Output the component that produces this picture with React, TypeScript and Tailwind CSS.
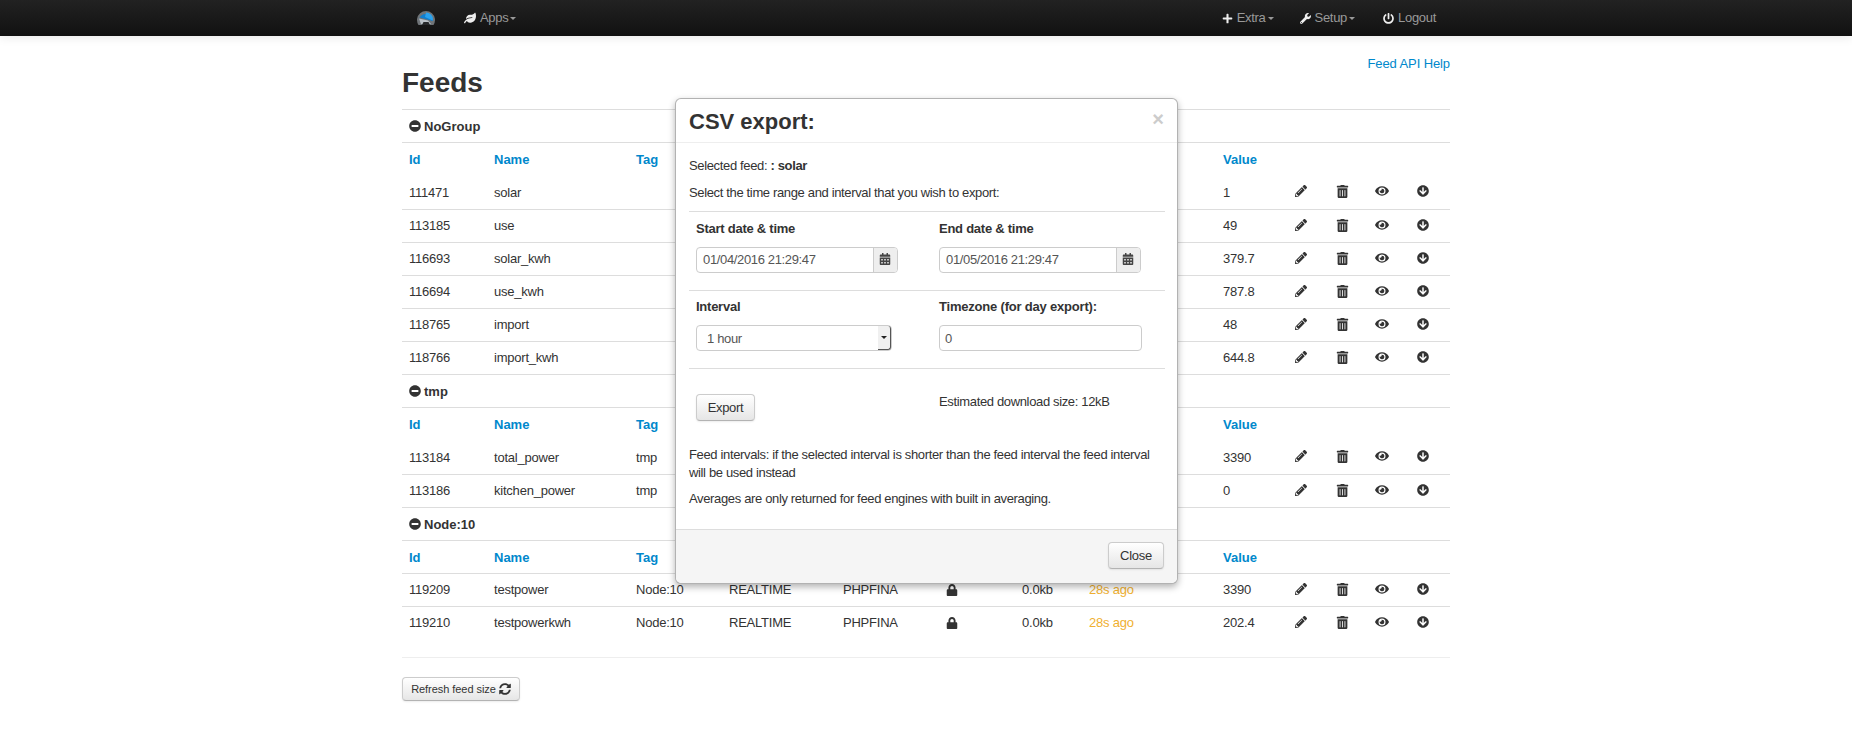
import React from "react";
import { FaArrowCircleDown, FaCalendarAlt, FaEye, FaLeaf, FaLock, FaMinusCircle, FaPencilAlt, FaPlus, FaPowerOff, FaSyncAlt, FaTrashAlt, FaWrench } from "react-icons/fa";

type Row = { id: string; name: string; tag?: string; dt?: string; eng?: string; size?: string; upd?: string; value: string };
type Group = { title: string; headLine?: boolean; rows: Row[] };

const groups: Group[] = [
  { title: "NoGroup", rows: [
    { id: "111471", name: "solar", value: "1" },
    { id: "113185", name: "use", value: "49" },
    { id: "116693", name: "solar_kwh", value: "379.7" },
    { id: "116694", name: "use_kwh", value: "787.8" },
    { id: "118765", name: "import", value: "48" },
    { id: "118766", name: "import_kwh", value: "644.8" },
  ]},
  { title: "tmp", rows: [
    { id: "113184", name: "total_power", tag: "tmp", value: "3390" },
    { id: "113186", name: "kitchen_power", tag: "tmp", value: "0" },
  ]},
  { title: "Node:10", headLine: true, rows: [
    { id: "119209", name: "testpower", tag: "Node:10", dt: "REALTIME", eng: "PHPFINA", size: "0.0kb", upd: "28s ago", value: "3390" },
    { id: "119210", name: "testpowerkwh", tag: "Node:10", dt: "REALTIME", eng: "PHPFINA", size: "0.0kb", upd: "28s ago", value: "202.4" },
  ]},
];

function Caret() {
  return <span className="ml-[2px] inline-block h-0 w-0 border-x-[3.5px] border-t-[3.5px] border-x-transparent border-t-[#999]" />;
}

function Logo() {
  return (
    <svg width="20" height="16" viewBox="0 0 20 16">
      <path d="M2.5 15 A9 9 0 1 1 17.5 15 L14 15 L6 15 Z" fill="#6f7478" />
      <path d="M3 9.5 A7.2 7.2 0 0 1 17 9.5 L16.5 11 L4 7.5 Z" fill="#0f7fd0" />
      <path d="M10 2.5 A7 7 0 0 1 17 9.5 L16.5 10.5 L9 7 Z" fill="#2aa2ee" />
      <path d="M3 8.5 L12 10.5 L15 14 L5 14 Z" fill="#b9c0c6" />
      <path d="M7.5 12 L12.5 12 L14 15 L6 15 Z" fill="#26282a" />
    </svg>
  );
}

function NavItem({ icon, label, caret, className = "" }: { icon: React.ReactNode; label: string; caret?: boolean; className?: string }) {
  return (
    <a className={`flex items-center text-[13px] tracking-[-0.3px] text-[#999] ${className}`}>
      <span className="mr-[4px] flex text-[#eee]">{icon}</span>
      {label}
      {caret && <Caret />}
    </a>
  );
}

function Btn({ children, className = "" }: { children: React.ReactNode; className?: string }) {
  return (
    <button className={`flex items-center justify-center rounded-[4px] border border-[#ccc] border-b-[#b3b3b3] bg-gradient-to-b from-white to-[#e6e6e6] text-[#333] shadow-[0_1px_2px_rgba(0,0,0,0.08)] ${className}`}>
      {children}
    </button>
  );
}

function DateField({ value }: { value: string }) {
  return (
    <div className="flex h-[26px] w-[202px] rounded-[4px] border border-[#ccc]">
      <div className="flex flex-1 items-center pl-[6px] text-[#555]">{value}</div>
      <div className="flex w-[24px] items-start justify-center rounded-r-[3px] border-l border-[#ccc] bg-[#eee] pr-[2px] pt-[5px] text-[#444]">
        <FaCalendarAlt size={12} />
      </div>
    </div>
  );
}

function FeedRow({ r, first, line }: { r: Row; first: boolean; line: boolean }) {
  const base = `p-0 pl-[7px] align-middle ${first && !line ? "h-[34px]" : "h-[33px]"} ${line ? "border-t border-[#ddd]" : ""}`;
  const td = line ? base : `${base} pt-px`;
  const ic = `${base} pb-[2px]`;
  return (
    <tr>
      <td className={td}>{r.id}</td>
      <td className={td}>{r.name}</td>
      <td className={td}>{r.tag}</td>
      <td className={td}>{r.dt}</td>
      <td className={td}>{r.eng}</td>
      <td className={base}>{r.dt && <FaLock size={12} className="text-[#333]" />}</td>
      <td className={td}>{r.size}</td>
      <td className={`${td} text-[#f0b030]`}>{r.upd}</td>
      <td className={td}>{r.value}</td>
      <td className={ic}><FaPencilAlt size={12} className="text-[#333]" /></td>
      <td className={ic}><FaTrashAlt size={13} className="text-[#333]" /></td>
      <td className={ic}><FaEye size={14} className="text-[#333]" /></td>
      <td className={ic}><FaArrowCircleDown size={12} className="text-[#333]" /></td>
    </tr>
  );
}

const widths = [85, 142, 93, 114, 103, 76, 67, 134, 72, 41, 39, 42, 40];

function FeedTable() {
  return (
    <table className="w-full table-fixed tracking-[-0.22px]">
      <colgroup>
        {widths.map((w, i) => <col key={i} style={{ width: w }} />)}
      </colgroup>
      <tbody>
        {groups.map((g) => (
          <React.Fragment key={g.title}>
            <tr>
              <td colSpan={13} className="h-[33px] border-t border-[#ddd] p-0 pl-[7px] align-middle font-bold tracking-normal">
                <span className="flex items-center gap-[3px]"><FaMinusCircle size={12} className="text-[#333]" /><span className="pt-[1px]">{g.title}</span></span>
              </td>
            </tr>
            <tr className="font-bold tracking-normal text-[#0088cc]">
              {["Id", "Name", "Tag", "", "", "", "", "", "Value", "", "", "", ""].map((h, i) => (
                <td key={i} className="h-[33px] border-t border-[#ddd] p-0 pl-[7px] pt-px align-middle">{h}</td>
              ))}
            </tr>
            {g.rows.map((r, i) => <FeedRow key={r.id} r={r} first={i === 0} line={i > 0 || !!g.headLine} />)}
          </React.Fragment>
        ))}
      </tbody>
    </table>
  );
}

function Modal() {
  return (
    <div className="absolute left-[675px] top-[98px] w-[503px] rounded-[6px] border border-[rgba(0,0,0,0.3)] bg-white shadow-[0_3px_7px_rgba(0,0,0,0.3)]">
      <div className="relative flex h-[44px] items-center border-b border-[#eee] pl-[13px]">
        <h3 className="pt-[2px] text-[22px] font-bold leading-[30px]">CSV export:</h3>
        <span className="absolute right-[13px] top-[10px] text-[20px] font-bold leading-[20px] text-[#ccc]">×</span>
      </div>
      <div className="h-[386px] pl-[13px] pr-[12px] pt-[13px] tracking-[-0.35px]">
        <p>Selected feed: <b>: solar</b></p>
        <p className="mt-[7px]">Select the time range and interval that you wish to export:</p>
        <div className="mt-[8px] flex h-[79px] border-t border-[#ddd] pl-[7px] pt-[7px]">
          <div className="w-[243px]"><div className="font-bold tracking-[-0.25px]">Start date &amp; time</div><div className="mt-[8px]"><DateField value="01/04/2016 21:29:47" /></div></div>
          <div><div className="font-bold tracking-[-0.25px]">End date &amp; time</div><div className="mt-[8px]"><DateField value="01/05/2016 21:29:47" /></div></div>
        </div>
        <div className="flex h-[78px] border-t border-[#ddd] pl-[7px] pt-[6px]">
          <div className="w-[243px]">
            <div className="font-bold tracking-[-0.25px]">Interval</div>
            <div className="mt-[8px] flex h-[26px] w-[196px] rounded-[4px] border border-[#ccc]">
              <div className="flex flex-1 items-center pl-[10px] pt-px text-[#555]">1 hour</div>
              <div className="flex w-[13px] items-center justify-center rounded-r-[3px] border-b border-r border-[#555] bg-[#f0f0f0]">
                <span className="h-0 w-0 border-x-[3px] border-t-[3px] border-x-transparent border-t-[#222]" />
              </div>
            </div>
          </div>
          <div>
            <div className="font-bold tracking-[-0.2px]">Timezone (for day export):</div>
            <div className="mt-[8px] flex h-[26px] w-[203px] items-center rounded-[4px] border border-[#ccc] pl-[5px] pt-px text-[#555]">0</div>
          </div>
        </div>
        <div className="flex h-[78px] border-t border-[#ddd] pl-[7px] pt-[23px]">
          <div className="w-[243px]"><Btn className="mt-[2px] h-[27px] w-[59px]">Export</Btn></div>
          <div>Estimated download size: 12kB</div>
        </div>
        <p className="leading-[18px]">Feed intervals: if the selected interval is shorter than the feed interval the feed interval will be used instead</p>
        <p className="mt-[8px] leading-[18px]">Averages are only returned for feed engines with built in averaging.</p>
      </div>
      <div className="flex h-[54px] items-start justify-end rounded-b-[6px] border-t border-[#ddd] bg-[#f5f5f5] pr-[13px] pt-[12px]">
        <Btn className="h-[27px] w-[56px] tracking-[-0.25px]">Close</Btn>
      </div>
    </div>
  );
}

export default function App() {
  return (
    <div className="relative min-h-[741px] bg-white font-['Liberation_Sans',Arial,sans-serif] text-[13px] leading-[20px] text-[#333]">
      <nav className="h-[36px] bg-gradient-to-b from-[#222222] to-[#111111] shadow-[0_1px_10px_rgba(0,0,0,0.1)]">
        <div className="mx-auto flex h-full w-[1048px] items-center">
          <span className="ml-[14px] flex"><Logo /></span>
          <NavItem className="ml-[28px]" icon={<FaLeaf size={12} />} label="Apps" caret />
          <div className="flex-1" />
          <NavItem icon={<FaPlus size={11} />} label="Extra" caret />
          <NavItem className="ml-[26px]" icon={<FaWrench size={11} />} label="Setup" caret />
          <NavItem className="ml-[28px] mr-[14px]" icon={<FaPowerOff size={11} />} label="Logout" />
        </div>
      </nav>
      <main className="mx-auto w-[1048px]">
        <div className="flex items-start justify-between">
          <h2 className="mb-[6px] mt-[27px] text-[28px] font-bold leading-[40px]">Feeds</h2>
          <a className="mt-[18px] tracking-[-0.1px] text-[#0088cc]">Feed API Help</a>
        </div>
        <FeedTable />
        <div className="mt-[17px] border-t border-[#eee] pt-[19px]">
          <Btn className="h-[24px] w-[118px] gap-[3px] text-[11px] tracking-[-0.05px]">Refresh feed size <FaSyncAlt size={12} /></Btn>
        </div>
      </main>
      <Modal />
    </div>
  );
}
